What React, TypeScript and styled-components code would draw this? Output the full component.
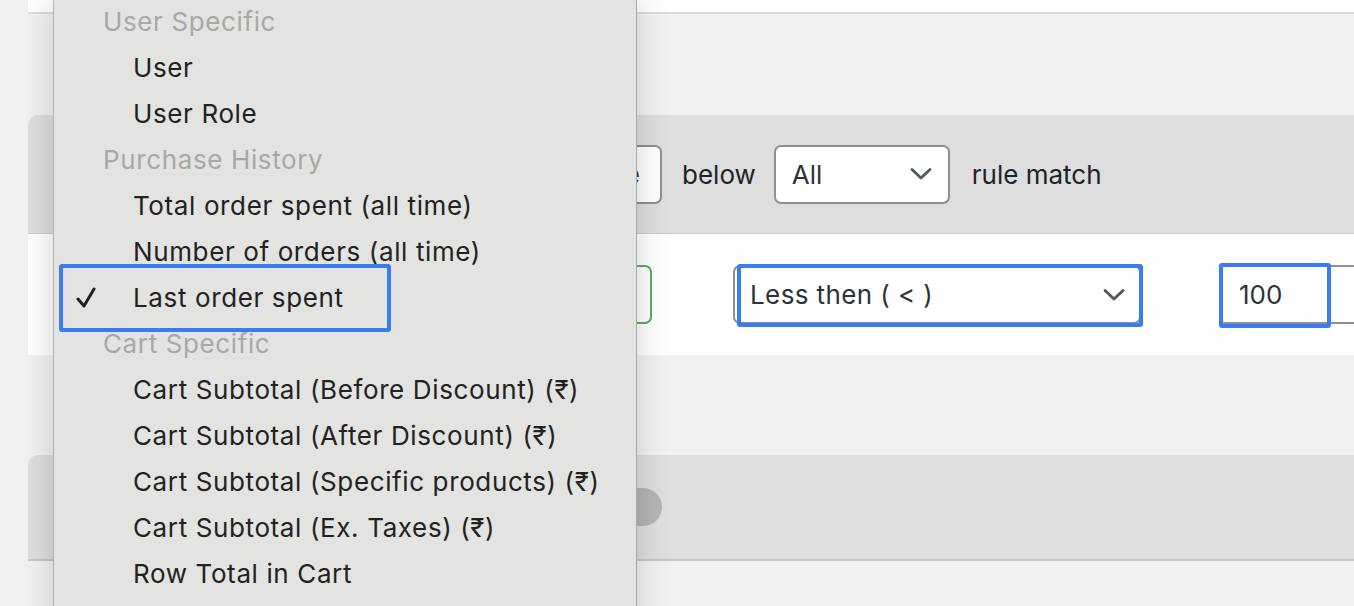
import React from "react";
import styled, { createGlobalStyle } from "styled-components";

const Global = createGlobalStyle`
  html, body { margin: 0; padding: 0; }
  body {
    background: #f1f1f1;
    font-family: Inter, "Open Sans", "Liberation Sans", sans-serif;
    color: #1d2327;
    overflow: hidden;
  }
`;

const Page = styled.div`
  position: relative;
  width: 1354px;
  height: 606px;
  overflow: hidden;
  padding-left: 28px;
  box-sizing: border-box;
  display: flex;
  flex-direction: column;
`;

const TopCard = styled.div`
  height: 12px;
  background: #fff;
  border-bottom: 2px solid #dcdcdc;
  margin-bottom: 101px;
`;

const Section = styled.section<{ $gap?: number }>`
  display: flex;
  flex-direction: column;
  margin-bottom: ${(p) => p.$gap ?? 0}px;
`;

const Header = styled.div<{ $h: number; $pl: number; $border?: string }>`
  height: ${(p) => p.$h}px;
  background: #dedede;
  border-top-left-radius: 10px;
  display: flex;
  align-items: center;
  gap: 20px;
  padding-left: ${(p) => p.$pl}px;
  border-bottom: ${(p) => p.$border ?? "1px solid #cfcfcf"};
  font-size: 26px;
`;

const Body = styled.div`
  height: 121px;
  background: #fff;
  display: flex;
  align-items: center;
  padding-left: 424px;
  overflow: hidden;
`;

const Label = styled.span`
  color: #1d2327;
  white-space: nowrap;
`;

const SelectBox = styled.div<{ $w: number; $tone?: "gray" | "green" }>`
  position: relative;
  flex: none;
  width: ${(p) => p.$w}px;
  height: 59px;
  box-sizing: border-box;
  background: #fff;
  border: 2px solid ${(p) => (p.$tone === "green" ? "#5cad5f" : "#8c8f94")};
  border-radius: 7px;
  display: flex;
  align-items: center;
  justify-content: space-between;
  padding: 0 16px 0 16px;
  font-size: 26px;
  color: #2c3338;
  white-space: nowrap;
`;

const Chevron = () => (
  <svg width="22" height="14" viewBox="0 0 22 14" fill="none">
    <path d="M2 2.5 L11 11 L20 2.5" stroke="#50575e" strokeWidth="2.8" strokeLinecap="round" strokeLinejoin="round" />
  </svg>
);

const Highlight = styled.div<{ $l: number; $t: number; $w: number; $h: number }>`
  position: absolute;
  left: ${(p) => p.$l}px;
  top: ${(p) => p.$t}px;
  width: ${(p) => p.$w}px;
  height: ${(p) => p.$h}px;
  box-sizing: border-box;
  border: 4.5px solid #3a7bf2;
  border-radius: 3px;
  pointer-events: none;
`;

const Toggle = styled.div`
  width: 62px;
  height: 38px;
  border-radius: 19px;
  background: #b5b5b5;
`;

const Menu = styled.div`
  position: absolute;
  left: 53px;
  top: -1px;
  width: 584px;
  height: 640px;
  box-sizing: border-box;
  background: #e3e3e1;
  border-left: 1px solid #b4b4b4;
  border-right: 1px solid #a9a9a9;
  box-shadow: 0 0 30px rgba(0, 0, 0, 0.18);
  font-family: Inter, "Open Sans", "Liberation Sans", sans-serif;
  font-size: 26px;
  letter-spacing: 0.62px;
`;

const MenuRow = styled.div<{ $group?: boolean }>`
  position: relative;
  height: 46px;
  line-height: 46px;
  padding-left: ${(p) => (p.$group ? 49 : 79)}px;
  color: ${(p) => (p.$group ? "#a8a8a8" : "#222")};
  white-space: nowrap;
`;

const Check = styled.svg`
  position: absolute;
  left: 22px;
  top: 12px;
`;

type Item = { text: string; group?: boolean; checked?: boolean };

const items: Item[] = [
  { text: "User Specific", group: true },
  { text: "User" },
  { text: "User Role" },
  { text: "Purchase History", group: true },
  { text: "Total order spent (all time)" },
  { text: "Number of orders (all time)" },
  { text: "Last order spent", checked: true },
  { text: "Cart Specific", group: true },
  { text: "Cart Subtotal (Before Discount) (₹)" },
  { text: "Cart Subtotal (After Discount) (₹)" },
  { text: "Cart Subtotal (Specific products) (₹)" },
  { text: "Cart Subtotal (Ex. Taxes) (₹)" },
  { text: "Row Total in Cart" },
];

export default function App() {
  return (
    <>
      <Global />
      <Page>
        <TopCard />
        <Section $gap={100}>
          <Header $h={118} $pl={406}>
            <SelectBox $w={228} style={{ justifyContent: "flex-end", paddingRight: 20 }}>
              <span>Choose</span>
            </SelectBox>
            <Label>below</Label>
            <SelectBox $w={176} style={{ marginLeft: -2 }}>
              <span>All</span>
              <Chevron />
            </SelectBox>
            <Label style={{ marginLeft: 2 }}>rule match</Label>
          </Header>
          <Body>
            <SelectBox $w={200} $tone="green" />
            <SelectBox $w={408} style={{ marginLeft: 81, paddingLeft: 15, paddingRight: 14, letterSpacing: "0.4px" }}>
              <span>Less then ( &lt; )</span>
              <Chevron />
              <Highlight $l={2} $t={-3} $w={406} $h={63} />
            </SelectBox>
            <SelectBox $w={300} style={{ marginLeft: 78, borderRadius: 4, paddingLeft: 18 }}>
              <span>100</span>
              <Highlight $l={-2} $t={-4} $w={112} $h={65} />
            </SelectBox>
          </Body>
        </Section>
        <Section>
          <Header $h={104} $pl={572} $border="2px solid #c6c6ca">
            <Toggle />
          </Header>
        </Section>
        <Menu>
          {items.map((it) => (
            <MenuRow key={it.text} $group={it.group}>
              {it.checked && (
                <Check width="20" height="22" viewBox="0 0 20 22" fill="none">
                  <path d="M2 12 L8 19 L18 2" stroke="#222" strokeWidth="3" strokeLinecap="round" strokeLinejoin="round" />
                </Check>
              )}
              {it.text}
              {it.checked && <Highlight $l={5} $t={-11} $w={332} $h={68} />}
            </MenuRow>
          ))}
        </Menu>
      </Page>
    </>
  );
}
